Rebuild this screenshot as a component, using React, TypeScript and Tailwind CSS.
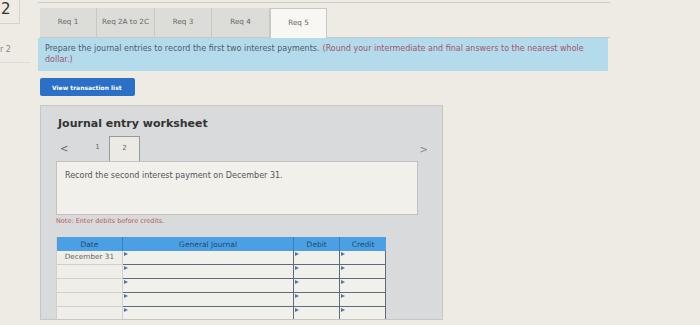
import React from 'react';

const tabs = ['Req 1', 'Req 2A to 2C', 'Req 3', 'Req 4', 'Req 5'];
const tabWidths = ['w-[57px]', 'w-[58px]', 'w-[57px]', 'w-[58px]', 'w-[57px]'];

const Marker = () => (
  <span className="absolute left-[1px] top-[1px] w-0 h-0 border-t-[2px] border-b-[2px] border-l-[4px] border-t-transparent border-b-transparent border-l-[#4f76a8]" />
);

const JournalRow: React.FC<{ date?: string }> = ({ date }) => (
  <div className="flex h-[14px] shrink-0">
    <div className="w-[66px] border-b border-r border-[#cfcfcc] bg-[#efeee9] flex items-center justify-center text-[7.3px] text-[#666]">
      {date}
    </div>
    <div className="relative w-[172px] border-b-[1.5px] border-r-[1.5px] border-[#5d6b7d] bg-[#f1f0eb]">
      <Marker />
    </div>
    <div className="relative w-[46px] border-b-[1.5px] border-r-[1.5px] border-[#5d6b7d] bg-[#f1f0eb]">
      <Marker />
    </div>
    <div className="relative w-[46px] border-b-[1.5px] border-r-[1.5px] border-[#5d6b7d] bg-[#f1f0eb]">
      <Marker />
    </div>
  </div>
);

const App: React.FC = () => {
  return (
    <div className="w-[700px] h-[325px] overflow-hidden bg-[#eeebe4] flex font-['DejaVu_Sans',sans-serif]">
      {/* left gutter */}
      <div className="w-[38px] shrink-0 flex flex-col">
        <div className="w-[20px] h-[24px] border-r border-b border-[#d6d3cc] pt-[2px] pl-[1px] text-[15px] leading-none text-[#333]">
          2
        </div>
        <div className="mt-[20px] text-[8px] text-[#888] pb-[6px] border-b border-[#dedbd4] w-[30px]">r 2</div>
      </div>

      {/* main */}
      <div className="flex-1 flex flex-col pt-[2px]">
        <div className="w-[572px] border-t border-[#cfccc5] pt-[5px] pl-[2px]">
          <div className="flex h-[30px] border-b border-[#c8c8c4] w-[570px]">
            {tabs.map((t, i) => (
              <div
                key={t}
                className={`${tabWidths[i]} flex items-center justify-center text-[7.2px] border-r border-[#c8c8c4] ${
                  i === 4 ? 'bg-[#f8f7f3] border-l border-t text-[#666] -mb-px' : 'bg-[#dcdcd9] text-[#666]'
                }`}
              >
                {t}
              </div>
            ))}
          </div>
        </div>

        <div className="w-[570px] h-[33px] bg-[#b3dbeb] px-[7px] pt-[5px] text-[8px] leading-[11px] text-[#4d5b6b]">
          <div className="flex gap-[3px]">
            <span>Prepare the journal entries to record the first two interest payments.</span>
            <span className="text-[#a2566f]">(Round your intermediate and final answers to the nearest whole</span>
          </div>
          <div className="text-[#a2566f]">dollar.)</div>
        </div>

        <div className="ml-[2px] mt-[7px] w-[95px] h-[18px] bg-[#2b6fc6] rounded-[2px] flex items-center pl-[12px] text-[6px] font-bold text-white">
          View transaction list
        </div>

        <div className="ml-[2px] mt-[9px] w-[403px] h-[215px] overflow-hidden bg-[#d9dadb] border border-[#c6c6c6] pl-[15px] pt-[10px]">
          <div className="text-[11px] font-bold text-[#333] pl-[2px]">Journal entry worksheet</div>

          <div className="mt-[3px] flex items-end h-[25px] w-[372px]">
            <span className="w-[30px] pl-[4px] pb-[7px] text-[10px] text-[#666] leading-none">&lt;</span>
            <span className="w-[23px] pb-[8px] text-[7px] text-[#666] text-center">1</span>
            <div className="w-[31px] h-[25px] border border-b-0 border-[#9a9a9a] bg-[#eceae5] flex items-center justify-center text-[7px] text-[#666]">
              2
            </div>
            <span className="flex-1 text-right pb-[6px] text-[10px] text-[#888] leading-none">&gt;</span>
          </div>

          <div className="w-[362px] h-[54px] bg-[#f1f0eb] border border-[#c2c2c2] pl-[8px] pt-[8px] text-[8px] text-[#555]">
            Record the second interest payment on December 31.
          </div>

          <div className="mt-[2px] text-[6.5px] text-[#b35f5f]">Note: Enter debits before credits.</div>

          <div className="mt-[11px] w-[330px] flex flex-col border-l border-[#cfcfcc]">
            <div className="flex h-[14px] shrink-0 bg-[#4ba0e4] text-[7.5px] text-[#24476f]">
              <div className="w-[66px] flex items-center justify-center border-r border-[#3b7fc0]">Date</div>
              <div className="w-[172px] flex items-center justify-center border-r border-[#3b7fc0]">General Journal</div>
              <div className="w-[46px] flex items-center justify-center border-r border-[#3b7fc0]">Debit</div>
              <div className="w-[46px] flex items-center justify-center">Credit</div>
            </div>
            <JournalRow date="December 31" />
            <JournalRow />
            <JournalRow />
            <JournalRow />
            <JournalRow />
          </div>
        </div>
      </div>
    </div>
  );
};

export default App;
